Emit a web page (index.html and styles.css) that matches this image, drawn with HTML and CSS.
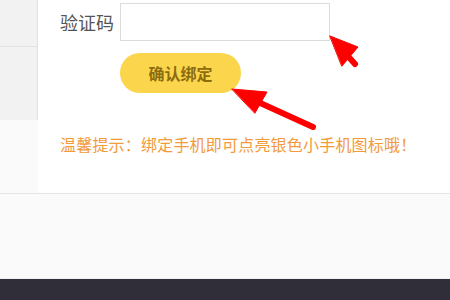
FILE: index.html
```html
<!DOCTYPE html>
<html>
<head>
<meta charset="utf-8">
<title>绑定手机</title>
<link rel="stylesheet" href="styles.css">
</head>
<body>
<div class="main">
 <div class="side">
  <div class="side-item first"></div>
  <div class="side-item"></div>
  <div class="side-rest"></div>
 </div>
 <div class="panel">
  <div class="row">
   <label class="lbl" for="code">验证码</label>
   <input class="ipt" id="code" type="text">
  </div>
  <div class="btn-row">
   <button class="btn">确认绑定</button>
  </div>
  <p class="tip">温馨提示：绑定手机即可点亮银色小手机图标哦！</p>
 </div>
</div>
<div class="foot-top"></div>
<div class="foot"></div>

<svg class="marks" width="450" height="300" viewBox="0 0 450 300">
 <g fill="#f00" stroke="#f00" stroke-linecap="round">
  <line x1="346" y1="54" x2="355" y2="64" stroke-width="6"/>
  <polygon points="330,36 358,47 342,66" stroke-width="1" stroke-linejoin="round"/>
  <line x1="258" y1="102" x2="313" y2="127" stroke-width="6"/>
  <polygon points="232,89 267,92 255,113" stroke-width="1" stroke-linejoin="round"/>
 </g>
</svg>
</body>
</html>
```

FILE: styles.css
```css
html, body {
 margin:0;
 padding:0;
}
body {
 position:relative;
 width:450px;
 height:300px;
 overflow:hidden;
 background:#fff;
 font-family:"Noto Sans CJK SC", "Noto Sans", sans-serif;
}
.main {
 display:flex;
 height:193px;
 border-bottom:1px solid #e6e6e6;
}
.side {
 width:38px;
 display:flex;
 flex-direction:column;
 background:#fafafa;
}
.side-item {
 background:#f2f2f2;
 border-right:1px solid #e2e2e2;
 height:73px;
}
.side-item.first {
 height:46px;
 border-bottom:1px solid #e2e2e2;
}
.side-rest {flex:1;}
.panel {
 flex:1;
 padding:3px 0 0 22px;
}
.row {
 display:flex;
 align-items:center;
 gap:6px;
}
.lbl {
 font-size:18px;
 color:#555;
 line-height:38px;
}
.ipt {
 box-sizing:border-box;
 width:210px;
 height:38px;
 margin:0;
 border:1px solid #dcdcdc;
 background:#fff;
 outline:none;
}
.btn-row {
 padding:12px 0 0 60px;
}
.btn {
 display:block;
 width:121px;
 height:40px;
 border:0;
 border-radius:20px;
 background:#fbd54b;
 color:#8d6c10;
 font-family:inherit;
 font-size:16px;
 font-weight:bold;
}
.tip {
 margin:40px 0 0;
 font-size:16px;
 line-height:22px;
 letter-spacing:0.2px;
 color:#f39a3a;
}
.foot-top {
 height:84px;
 background:#fafafa;
 border-bottom:1px solid #f2f2f2;
}
.foot {
 height:21px;
 background:#302e38;
}
.marks {
 position:absolute;
 left:0;
 top:0;
 pointer-events:none;
}
```
